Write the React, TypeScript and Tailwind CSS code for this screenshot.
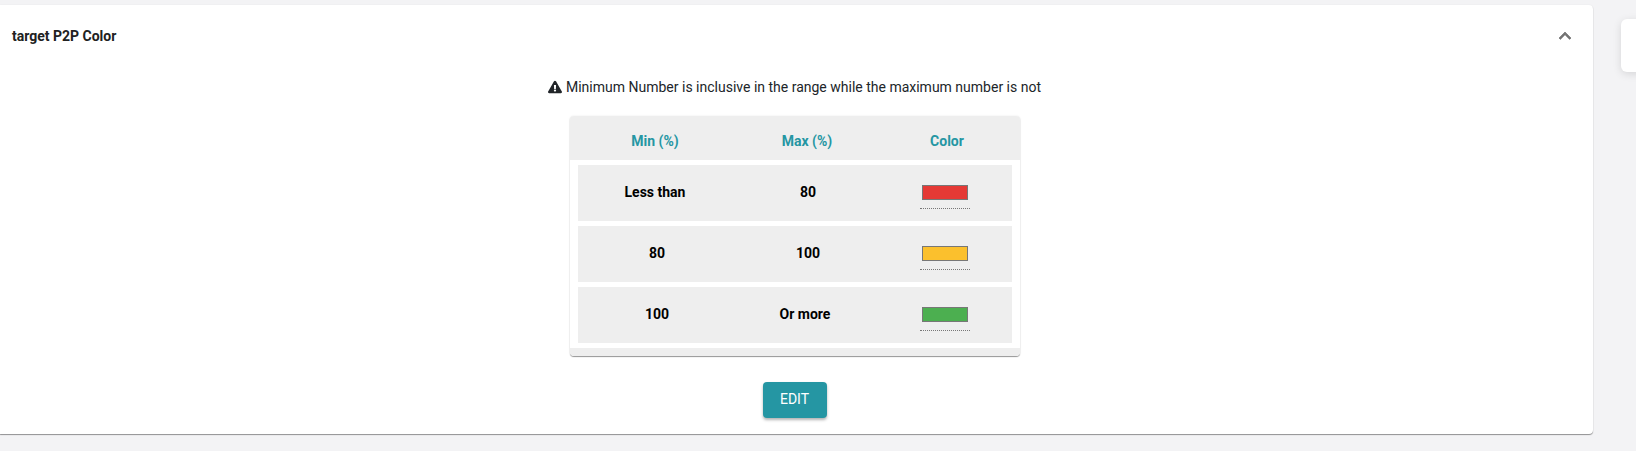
import { FaExclamationTriangle } from "react-icons/fa";

const rows = [
  { a: "Less than", b: "80", color: "bg-[#e53935]", grid: "grid-cols-[154px_152px_128px]" },
  { a: "80", b: "100", color: "bg-[#fbc02d]", grid: "grid-cols-[158px_144px_132px]" },
  { a: "100", b: "Or more", color: "bg-[#4caf50]", grid: "grid-cols-[158px_138px_138px]" },
];

export default function App() {
  return (
    <div className="h-[451px] overflow-hidden bg-[#f3f3f5] font-['Roboto',sans-serif] flex items-start gap-[28px]">
      <div className="mt-[5px] h-[429px] w-[1593px] shrink-0 rounded-r-[4px] bg-white shadow-[0_1px_1px_rgba(0,0,0,0.4),0_0_2px_rgba(0,0,0,0.06)] flex flex-col">
        <div className="h-[60px] shrink-0 pl-[12px] pr-[16px] flex items-center justify-between">
          <span className="text-[14px] leading-[20px] font-bold text-[#212121] mt-[1px]">target P2P Color</span>
          <svg viewBox="0 0 24 24" className="size-[24px] fill-[#0000008a] stroke-[#0000008a] stroke-[0.5] mt-[2px]">
            <path d="M12 8l-6 6 1.41 1.41L12 10.83l4.59 4.58L18 14z" />
          </svg>
        </div>
        <div className="flex flex-col items-center">
          <p className="mt-[12px] h-[20px] flex items-center gap-[4px] text-[14px] leading-[20px] text-[#212529] ml-[-4px]">
            <FaExclamationTriangle className="text-[14px] text-[#212529]" />
            Minimum Number is inclusive in the range while the maximum number is not
          </p>
          <div className="mt-[19px] w-[450px] ml-[-3px] rounded-[4px] bg-white overflow-hidden shadow-[0_1px_1px_rgba(0,0,0,0.4),0_0_2px_rgba(0,0,0,0.1)]">
            <div className="h-[44px] bg-[#eeeeee] px-[8px] grid grid-cols-[154px_150px_130px] items-center text-center text-[14px] font-bold text-[#2596a3] pt-[6px]">
              <span>Min (%)</span>
              <span>Max (%)</span>
              <span>Color</span>
            </div>
            <div className="px-[8px] pt-[5px] pb-[5px] flex flex-col gap-[5px]">
              {rows.map((r) => (
                <div key={r.a} className={`h-[56px] bg-[#eeeeee] grid ${r.grid} text-center text-[14px] font-bold text-black`}>
                  <span className="self-center mb-[2px]">{r.a}</span>
                  <span className="self-center mb-[2px]">{r.b}</span>
                  <div className="justify-self-end mt-[20px] mr-[42px] w-[50px] h-[24px] border-b border-dotted border-[#777] flex justify-center items-start">
                    <div className={`w-[46px] h-[15px] border border-[#777] ${r.color}`} />
                  </div>
                </div>
              ))}
            </div>
            <div className="h-[8px] bg-[#eeeeee]" />
          </div>
          <button className="mt-[26px] ml-[-4px] w-[64px] h-[36px] pb-[2px] rounded-[4px] bg-[#2596a3] text-white text-[14px] shadow-[0_2px_3px_rgba(0,0,0,0.3)]">
            EDIT
          </button>
        </div>
      </div>
      <div className="mt-[19px] w-[40px] h-[53px] shrink-0 rounded-[6px] bg-white shadow-[0_2px_8px_rgba(0,0,0,0.12)]" />
    </div>
  );
}
